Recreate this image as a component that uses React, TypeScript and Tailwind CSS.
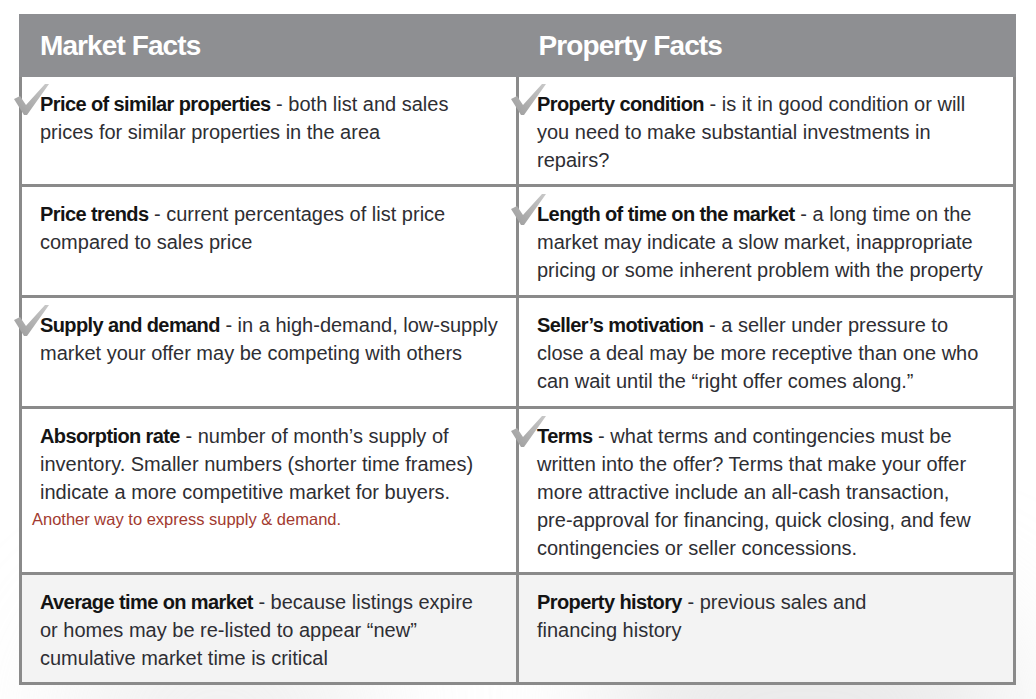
import type { ReactNode } from 'react';

type Fact = {
  title: string;
  text: ReactNode;
  checked?: boolean;
  note?: string;
};

type Row = { h: string; left: Fact; right: Fact };

const ROWS: Row[] = [
  {
    h: 'h-[107px]',
    left: {
      title: 'Price of similar properties',
      text: ' - both list and sales prices for similar properties in the area',
      checked: true,
    },
    right: {
      title: 'Property condition',
      text: ' - is it in good condition or will you need to make substantial investments in repairs?',
      checked: true,
    },
  },
  {
    h: 'h-[108px]',
    left: {
      title: 'Price trends',
      text: ' - current percentages of list price compared to sales price',
    },
    right: {
      title: 'Length of time on the market',
      text: ' - a long time on the market may indicate a slow market, inappropriate pricing or some inherent problem with the property',
      checked: true,
    },
  },
  {
    h: 'h-[108px]',
    left: {
      title: 'Supply and demand',
      text: ' - in a high-demand, low-supply market your offer may be competing with others',
      checked: true,
    },
    right: {
      title: 'Seller\u2019s motivation',
      text: ' - a seller under pressure to close a deal may be more receptive than one who can wait until the \u201cright offer comes along.\u201d',
    },
  },
  {
    h: 'h-[163px]',
    left: {
      title: 'Absorption rate',
      text: ' - number of month\u2019s supply of inventory. Smaller numbers (shorter time frames) indicate a more competitive market for buyers.',
      note: 'Another way to express supply & demand.',
    },
    right: {
      title: 'Terms',
      text: ' - what terms and contingencies must be written into the offer? Terms that make your offer more attractive include an all-cash transaction, pre\u2011approval for financing, quick closing, and few contingencies or seller concessions.',
      checked: true,
    },
  },
  {
    h: 'h-[107px]',
    left: {
      title: 'Average time on market',
      text: (
        <>
          {' - because listings expire'}
          <br />
          {'or homes may be re-listed to appear \u201cnew\u201d'}
          <br />
          {'cumulative market time is critical'}
        </>
      ),
    },
    right: {
      title: 'Property history',
      text: (
        <>
          {' - previous sales and'}
          <br />
          {'financing history'}
        </>
      ),
    },
  },
];

function Check() {
  return (
    <svg
      className="absolute -left-[8px] top-[7px] z-10"
      width="36"
      height="32"
      viewBox="0 0 36 32"
    >
      <defs>
        <linearGradient id="chk" x1="0" y1="1" x2="1" y2="0">
          <stop offset="0" stopColor="#9c9c9c" />
          <stop offset="1" stopColor="#c9c9c9" />
        </linearGradient>
      </defs>
      <polygon points="0,15 6,12 12,21 31,0 35,0 13,31 10,31" fill="url(#chk)" />
    </svg>
  );
}

function Cell({ fact, h, last }: { fact: Fact; h: string; last: boolean }) {
  return (
    <div className={`relative pl-[18px] pr-[18px] pt-[13px] ${h} ${last ? 'bg-white/90' : 'bg-white'}`}>
      {fact.checked && <Check />}
      <p className="font-['Liberation_Sans',Arial,sans-serif] text-[20px] leading-[28px] text-[#2e2e33]">
        <span className="text-[20px] font-bold tracking-[-0.6px] text-[#141414]">{fact.title}</span>
        {fact.text}
      </p>
      {fact.note && (
        <p className="-ml-[8px] font-['Liberation_Sans',Arial,sans-serif] text-[16.5px] leading-[27px] text-[#a23a30]">
          {fact.note}
        </p>
      )}
    </div>
  );
}

export default function App() {
  return (
    <div className="relative h-[699px] w-full overflow-hidden bg-white">
      <div className="pointer-events-none absolute -bottom-32 left-[60px] h-56 w-80 rounded-full bg-[#dcdcdc] opacity-40 blur-3xl" />
      <div className="pointer-events-none absolute -bottom-28 right-[20px] h-52 w-[420px] rounded-full bg-[#d4d4d4] opacity-50 blur-3xl" />
      <div className="relative ml-[19px] mt-[14px] w-[997px]">
        <div className="grid h-[63px] grid-cols-2 items-center bg-[#8e8f92] font-['Liberation_Sans',Arial,sans-serif] text-[28px] font-bold tracking-[-0.9px] text-white">
          <div className="pl-[21px]">Market Facts</div>
          <div className="pl-[21px]">Property Facts</div>
        </div>
        <div className="grid grid-cols-2 gap-[3px] bg-[#8a8a8a] px-[3px] pb-[3px]">
          {ROWS.map((r, i) => (
            <div key={i} className="contents">
              <Cell fact={r.left} h={r.h} last={i === ROWS.length - 1} />
              <Cell fact={r.right} h={r.h} last={i === ROWS.length - 1} />
            </div>
          ))}
        </div>
      </div>
    </div>
  );
}
